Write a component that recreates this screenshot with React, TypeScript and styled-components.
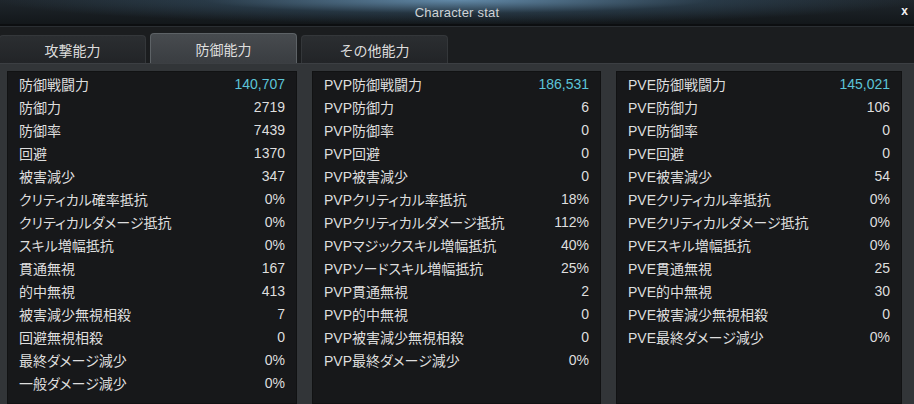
import React from 'react';
import styled, { createGlobalStyle } from 'styled-components';

const text = '#dedede';
const accent = '#5cc4d8';
const font = `"Liberation Sans", "Noto Sans CJK JP", sans-serif`;

type Stat = { label: string; value: string; hi?: boolean };

const columns: Stat[][] = [
  [
    { label: '防御戦闘力', value: '140,707', hi: true },
    { label: '防御力', value: '2719' },
    { label: '防御率', value: '7439' },
    { label: '回避', value: '1370' },
    { label: '被害減少', value: '347' },
    { label: 'クリティカル確率抵抗', value: '0%' },
    { label: 'クリティカルダメージ抵抗', value: '0%' },
    { label: 'スキル増幅抵抗', value: '0%' },
    { label: '貫通無視', value: '167' },
    { label: '的中無視', value: '413' },
    { label: '被害減少無視相殺', value: '7' },
    { label: '回避無視相殺', value: '0' },
    { label: '最終ダメージ減少', value: '0%' },
    { label: '一般ダメージ減少', value: '0%' },
  ],
  [
    { label: 'PVP防御戦闘力', value: '186,531', hi: true },
    { label: 'PVP防御力', value: '6' },
    { label: 'PVP防御率', value: '0' },
    { label: 'PVP回避', value: '0' },
    { label: 'PVP被害減少', value: '0' },
    { label: 'PVPクリティカル率抵抗', value: '18%' },
    { label: 'PVPクリティカルダメージ抵抗', value: '112%' },
    { label: 'PVPマジックスキル増幅抵抗', value: '40%' },
    { label: 'PVPソードスキル増幅抵抗', value: '25%' },
    { label: 'PVP貫通無視', value: '2' },
    { label: 'PVP的中無視', value: '0' },
    { label: 'PVP被害減少無視相殺', value: '0' },
    { label: 'PVP最終ダメージ減少', value: '0%' },
  ],
  [
    { label: 'PVE防御戦闘力', value: '145,021', hi: true },
    { label: 'PVE防御力', value: '106' },
    { label: 'PVE防御率', value: '0' },
    { label: 'PVE回避', value: '0' },
    { label: 'PVE被害減少', value: '54' },
    { label: 'PVEクリティカル率抵抗', value: '0%' },
    { label: 'PVEクリティカルダメージ抵抗', value: '0%' },
    { label: 'PVEスキル増幅抵抗', value: '0%' },
    { label: 'PVE貫通無視', value: '25' },
    { label: 'PVE的中無視', value: '30' },
    { label: 'PVE被害減少無視相殺', value: '0' },
    { label: 'PVE最終ダメージ減少', value: '0%' },
  ],
];

const tabs = ['攻撃能力', '防御能力', 'その他能力'];

export default function App() {
  return (
    <>
      <Global />
      <Window>
        <TitleBar>
          <Title>Character stat</Title>
          <Close>x</Close>
        </TitleBar>
        <TabRow>
          {tabs.map((t, i) => (
            <Tab key={t} $active={i === 1}>
              {t}
            </Tab>
          ))}
        </TabRow>
        <Body>
          {columns.map((col, i) => (
            <Panel key={i}>
              {col.map((s) => (
                <Row key={s.label}>
                  <Label>{s.label}</Label>
                  <Value $hi={s.hi}>{s.value}</Value>
                </Row>
              ))}
            </Panel>
          ))}
        </Body>
      </Window>
    </>
  );
}

const Global = createGlobalStyle`
  html, body {
    margin: 0;
    padding: 0;
    background: #1b1d1f;
    overflow: hidden;
  }
`;

const Window = styled.div`
  width: 914px;
  height: 404px;
  display: flex;
  flex-direction: column;
  background: #1b1d1f;
  font-family: ${font};
  color: ${text};
  overflow: hidden;
`;

const TitleBar = styled.div`
  position: relative;
  height: 24px;
  flex-shrink: 0;
  display: flex;
  align-items: center;
  justify-content: center;
  background:
    radial-gradient(ellipse 460px 24px at 50% 0%, rgba(110, 155, 190, 0.85), rgba(60, 95, 122, 0.35) 55%, rgba(0, 0, 0, 0) 100%),
    linear-gradient(#1f262c, #13171a);
  border-bottom: 2px solid #0c0e10;
  box-shadow: 0 1px 0 #2a2e32;
`;

const Title = styled.div`
  font-size: 13px;
  color: #cfd3d6;
  letter-spacing: 0.2px;
`;

const Close = styled.div`
  position: absolute;
  right: 6px;
  top: 4px;
  font-size: 12px;
  font-weight: bold;
  color: #f2f2f2;
`;

const TabRow = styled.div`
  display: flex;
  align-items: flex-end;
  gap: 4px;
  height: 37px;
  margin-left: -1px;
  flex-shrink: 0;
  background: #1b1d1f;
`;

const Tab = styled.div<{ $active?: boolean }>`
  width: 147px;
  height: ${(p) => (p.$active ? 30 : 28)}px;
  box-sizing: border-box;
  display: flex;
  align-items: center;
  justify-content: center;
  font-size: 14px;
  color: ${text};
  border-radius: 4px 4px 0 0;
  border: 1px solid ${(p) => (p.$active ? '#5d6266' : '#34373a')};
  border-bottom: none;
  background: ${(p) =>
    p.$active
      ? 'linear-gradient(#474b4f, #3a3d41)'
      : 'linear-gradient(#2b2e31, #222427)'};
`;

const Body = styled.div`
  flex: 1;
  display: grid;
  grid-template-columns: 290px 289px 286px;
  column-gap: 15px;
  padding: 7px 9px 0 7px;
  background: #323538;
  border-top: 1px solid #3c3f43;
`;

const Panel = styled.div`
  background: #17181a;
  border: 1px solid #111213;
  padding: 0 11px;
  display: flex;
  flex-direction: column;
`;

const Row = styled.div`
  height: 23px;
  display: flex;
  align-items: center;
  justify-content: space-between;
  font-size: 14px;
`;

const Label = styled.span`
  white-space: nowrap;
  font-feature-settings: 'palt';
`;

const Value = styled.span<{ $hi?: boolean }>`
  color: ${(p) => (p.$hi ? accent : text)};
`;
